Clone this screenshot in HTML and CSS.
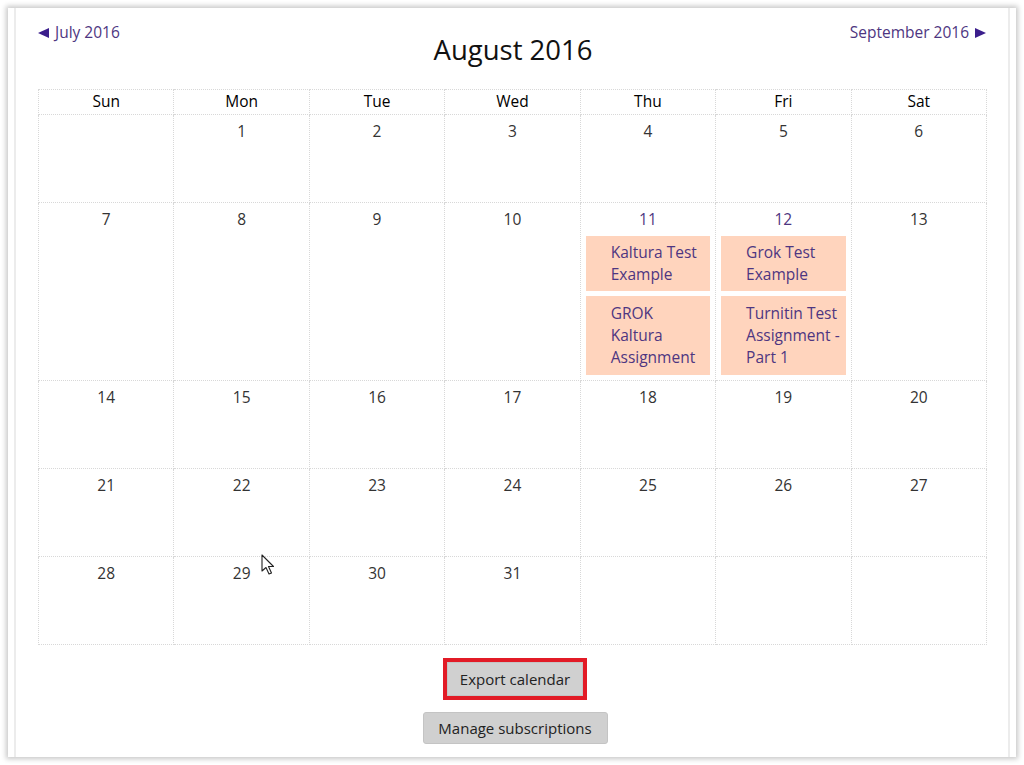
FILE: index.html
```html
<!DOCTYPE html>
<html>
<head>
<meta charset="utf-8">
<link rel="stylesheet" href="styles.css">
</head>
<body>
<div class="frame">
  <div class="inner">
    <div class="nav">
      <a class="prev" href="#"><svg class="arr" width="11" height="10" viewBox="0 0 11 10"><path d="M0 5 L11 0 L11 10 Z" fill="#3b1e8c"/></svg>July 2016</a>
      <h2 class="title">August 2016</h2>
      <a class="next" href="#">September 2016<svg class="arr" width="11" height="10" viewBox="0 0 11 10"><path d="M11 5 L0 0 L0 10 Z" fill="#3b1e8c"/></svg></a>
    </div>
    <table class="cal">
      <thead>
        <tr><th>Sun</th><th>Mon</th><th>Tue</th><th>Wed</th><th>Thu</th><th>Fri</th><th>Sat</th></tr>
      </thead>
      <tbody>
        <tr class="r1"><td></td><td><div class="day">1</div></td><td><div class="day">2</div></td><td><div class="day">3</div></td><td><div class="day">4</div></td><td><div class="day">5</div></td><td><div class="day">6</div></td></tr>
        <tr class="r2">
          <td><div class="day">7</div></td>
          <td><div class="day">8</div></td>
          <td><div class="day">9</div></td>
          <td><div class="day">10</div></td>
          <td><div class="day link">11</div>
            <div class="ev">Kaltura Test Example</div>
            <div class="ev tall">GROK Kaltura Assignment</div>
          </td>
          <td><div class="day link">12</div>
            <div class="ev">Grok Test Example</div>
            <div class="ev tall">Turnitin Test Assignment - Part 1</div>
          </td>
          <td><div class="day">13</div></td>
        </tr>
        <tr class="r3"><td><div class="day">14</div></td><td><div class="day">15</div></td><td><div class="day">16</div></td><td><div class="day">17</div></td><td><div class="day">18</div></td><td><div class="day">19</div></td><td><div class="day">20</div></td></tr>
        <tr class="r4"><td><div class="day">21</div></td><td><div class="day">22</div></td><td><div class="day">23</div></td><td><div class="day">24</div></td><td><div class="day">25</div></td><td><div class="day">26</div></td><td><div class="day">27</div></td></tr>
        <tr class="r5"><td><div class="day">28</div></td><td><div class="day">29</div></td><td><div class="day">30</div></td><td><div class="day">31</div></td><td></td><td></td><td></td></tr>
      </tbody>
    </table>
    <div class="actions">
      <div class="highlight"><button class="btn export">Export calendar</button></div>
      <button class="btn manage">Manage subscriptions</button>
    </div>
  </div>
  <svg class="cursor" width="14" height="22" viewBox="0 0 14 22">
    <path d="M1 1 L1 17 L5 13.5 L8 20 L10.5 19 L7.5 12.5 L12.5 12.5 Z" fill="#fff" stroke="#222" stroke-width="1.1" stroke-linejoin="round"/>
  </svg>
</div>
</body>
</html>
```

FILE: styles.css
```css
* { box-sizing: border-box; }
html, body { margin: 0; padding: 0; background: #ffffff; }
body {
  font-family: "Open Sans", "Noto Sans", "DejaVu Sans", sans-serif;
  color: #333;
  width: 1024px;
  height: 765px;
  overflow: hidden;
}
.frame {
  position: relative;
  margin: 8px 8px 0 8px;
  width: 1008px;
  height: 749px;
  background: #fff;
  box-shadow: 0 0 5px 2px rgba(0,0,0,0.22);
  padding: 0 6px;
}
.inner {
  height: 100%;
  border-left: 2px solid #ececec;
  border-right: 2px solid #ececec;
  padding: 0 20px 0 22px;
}
.nav {
  position: relative;
  height: 81px;
}
.nav a {
  position: absolute;
  top: 13px;
  display: flex;
  align-items: center;
  gap: 6px;
  font-size: 15.5px;
  color: #4e3681;
  text-decoration: none;
  line-height: 22px;
}
.nav .prev { left: 0; }
.nav .next { right: 2px; }
.nav .arr { display: block; margin-top: 1px; }
.title {
  margin: 0;
  padding-top: 25px;
  text-align: center;
  font-size: 27.5px;
  font-weight: 400;
  color: #111;
  line-height: 34px;
}
.cal {
  width: 949px;
  border-collapse: collapse;
  table-layout: fixed;
}
.cal th, .cal td {
  border: 1px dotted #d8d8d8;
  vertical-align: top;
  padding: 0;
}
.cal th {
  height: 25px;
  font-size: 15.5px;
  font-weight: 400;
  color: #000;
  text-align: center;
  line-height: 23px;
}
.cal td { height: 88px; }
.cal tr.r2 td { height: 178px; }
.day {
  text-align: center;
  font-size: 15.5px;
  line-height: 22px;
  padding-top: 5px;
  color: #333;
}
.day.link { color: #4e3681; }
.ev {
  margin: 5px;
  background: #ffd4bd;
  color: #4e3681;
  font-size: 15.5px;
  line-height: 22px;
  padding: 5px 5px 6px 25px;
}
.ev.tall { padding-top: 6px; padding-bottom: 7px; }
.day.link + .ev { margin-top: 6px; }
.actions {
  display: flex;
  flex-direction: column;
  align-items: center;
  padding-top: 13px;
  padding-left: 4px;
}
.highlight {
  border: 4px solid #e21b26;
}
.btn {
  font-family: "Open Sans", "Noto Sans", "DejaVu Sans", sans-serif;
  font-size: 15px;
  color: #222;
  background: #d0d0d0;
  border: 1px solid #c4c4c4;
  padding: 0 8px;
  margin: 0;
}
.export { height: 34px; width: 136px; border-radius: 0; }
.manage {
  margin-top: 12px;
  height: 32px;
  width: 185px;
  border-radius: 3px;
}
.cursor {
  position: absolute;
  left: 253px;
  top: 546px;
}
```
